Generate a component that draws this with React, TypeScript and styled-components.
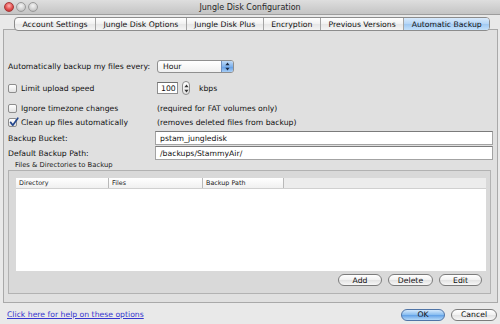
import styled, { createGlobalStyle } from 'styled-components';

const GlobalStyle = createGlobalStyle`
  html, body {
    margin: 0;
    padding: 0;
  }
  body {
    font-family: 'DejaVu Sans', 'Liberation Sans', sans-serif;
    font-size: 7.7px;
    color: #111;
  }
`;

const Window = styled.div`
  width: 500px;
  height: 324px;
  background: #e9e9e9;
  display: flex;
  flex-direction: column;
  overflow: hidden;
`;

const TitleBar = styled.div`
  flex: none;
  height: 14px;
  display: grid;
  grid-template-columns: 1fr auto 1fr;
  align-items: center;
  background: linear-gradient(#dedede, #c4c4c4);
  border-bottom: 1px solid #9d9d9d;
`;

const Lights = styled.div`
  display: flex;
  gap: 2px;
  padding-left: 4px;
`;

const Light = styled.span<{ $red?: boolean }>`
  width: 10px;
  height: 10px;
  border-radius: 50%;
  box-sizing: border-box;
  border: 1px solid ${(p) => (p.$red ? '#a33a3a' : '#9a9a9a')};
  background: ${(p) =>
    p.$red
      ? 'radial-gradient(circle at 50% 35%, #ffb3b3 0%, #e2504f 55%, #b42222 100%)'
      : 'radial-gradient(circle at 50% 35%, #f4f4f4 0%, #cfcfcf 60%, #a9a9a9 100%)'};
`;

const Title = styled.div`
  font-size: 8px;
  color: #262626;
`;

const Body = styled.div`
  flex: 1;
  display: flex;
  flex-direction: column;
  padding: 0 2px 0 3px;
`;

const TabStrip = styled.div`
  flex: none;
  align-self: flex-start;
  display: flex;
  height: 14px;
  margin: 2px 0 -2px 11px;
  box-sizing: border-box;
  border: 1px solid #8c8c8c;
  border-radius: 4px;
  overflow: hidden;
  position: relative;
  z-index: 1;
  background: linear-gradient(#ffffff, #f1f1f1 50%, #e6e6e6 51%, #f4f4f4);
`;

const Tab = styled.div<{ $active?: boolean }>`
  display: flex;
  align-items: center;
  padding: 0 7.5px;
  color: #111;
  white-space: nowrap;
  & + & {
    border-left: 1px solid #a4a4a4;
  }
  background: ${(p) =>
    p.$active
      ? 'linear-gradient(#d9eafc, #b4d5f7 50%, #9fc8f2 51%, #c3e0fb)'
      : 'transparent'};
`;

const Panel = styled.div`
  flex: none;
  height: 274px;
  box-sizing: border-box;
  border: 1px solid #a9a9a9;
  background: #e0e0e0;
  display: flex;
  flex-direction: column;
`;

const FormRow = styled.div<{ $mt: number }>`
  display: grid;
  grid-template-columns: 147px 1fr;
  align-items: center;
  height: 14px;
  margin-top: ${(p) => p.$mt}px;
  padding: 0 4px;
`;

const Label = styled.div`
  display: flex;
  align-items: center;
  gap: 4px;
  white-space: nowrap;
`;

const Note = styled.div`
  padding-left: 2px;
  white-space: nowrap;
`;

const Check = styled.span`
  width: 9px;
  height: 9px;
  box-sizing: border-box;
  border: 1px solid #8d8d8d;
  border-radius: 2px;
  background: linear-gradient(#ffffff, #e3e3e3);
  position: relative;
  flex: none;
  svg {
    position: absolute;
    left: 0;
    top: -2px;
  }
`;

const Popup = styled.div`
  margin-left: 2px;
  width: 77px;
  height: 13px;
  box-sizing: border-box;
  border: 1px solid #8f8f8f;
  border-radius: 3px;
  display: flex;
  overflow: hidden;
  background: linear-gradient(#ffffff, #f0f0f0);
`;

const PopupText = styled.div`
  flex: 1;
  padding-left: 5px;
  display: flex;
  align-items: center;
`;

const PopupArrows = styled.div`
  width: 11px;
  display: flex;
  align-items: center;
  justify-content: center;
  border-left: 1px solid #6f8fbf;
  background: linear-gradient(#bfdaf7, #7fb2ec 50%, #5f9ce6 51%, #a7cdf5);
`;

const SpinWrap = styled.div`
  display: flex;
  align-items: center;
  gap: 4px;
  margin-left: 2px;
`;

const NumField = styled.div`
  width: 21px;
  height: 12px;
  box-sizing: border-box;
  border: 1px solid #8e8e8e;
  border-top-color: #6e6e6e;
  background: #fff;
  padding-left: 3px;
  display: flex;
  align-items: center;
`;

const Stepper = styled.div`
  width: 8px;
  height: 14px;
  box-sizing: border-box;
  border: 1px solid #8e8e8e;
  border-radius: 4px;
  background: linear-gradient(#ffffff, #e2e2e2);
  display: flex;
  align-items: center;
  justify-content: center;
`;

const Unit = styled.span`
  margin-left: 5px;
`;

const TextInput = styled.div`
  height: 14px;
  box-sizing: border-box;
  border: 1px solid #a3a3a3;
  border-top-color: #7b7b7b;
  background: #fff;
  padding-left: 4px;
  display: flex;
  align-items: center;
  white-space: nowrap;
`;

const GroupLabel = styled.div`
  height: 10px;
  line-height: 10px;
  padding-left: 11px;
  font-size: 6.8px;
  color: #1a1a1a;
`;

const GroupBox = styled.div`
  height: 124px;
  margin: 0 6px 0 4px;
  box-sizing: border-box;
  border: 1px solid #b2b2b2;
  background: #d9d9d9;
  padding: 7px 4px 0 7px;
  display: flex;
  flex-direction: column;
`;

const Table = styled.div`
  height: 93px;
  background: #fff;
  display: flex;
  flex-direction: column;
`;

const HeaderRow = styled.div`
  height: 10px;
  display: flex;
  background: #ececec;
  border-bottom: 1px solid #d0d0d0;
`;

const HeaderCell = styled.div<{ $w: number }>`
  width: ${(p) => p.$w}px;
  box-sizing: border-box;
  padding-left: 3px;
  display: flex;
  align-items: center;
  font-size: 6.4px;
  color: #1a1a1a;
  border-right: 1px solid #b9b9b9;
  background: linear-gradient(#ffffff, #f0f0f0);
`;

const ButtonRow = styled.div`
  display: flex;
  justify-content: flex-end;
  gap: 6px;
  margin-top: 3px;
  padding-right: 4px;
`;

const PillButton = styled.div<{ $w: number; $primary?: boolean }>`
  width: ${(p) => p.$w}px;
  height: 12px;
  box-sizing: border-box;
  border: 1px solid ${(p) => (p.$primary ? '#4f74a6' : '#7c7c7c')};
  border-radius: 7px;
  display: flex;
  align-items: center;
  justify-content: center;
  color: #111;
  background: ${(p) =>
    p.$primary
      ? 'linear-gradient(#d4e8fb, #86bcf0 50%, #5f9fe6 51%, #b5d9f8)'
      : 'linear-gradient(#ffffff, #f1f1f1 50%, #e2e2e2 51%, #f7f7f7)'};
`;

const BottomBar = styled.div`
  flex: 1;
  display: flex;
  align-items: center;
  justify-content: space-between;
  padding: 2px 1px 0 4px;
`;

const HelpLink = styled.a`
  color: #3535cf;
  text-decoration: underline;
  cursor: pointer;
`;

const DialogButtons = styled.div`
  display: flex;
  gap: 6px;
`;

function CheckMark() {
  return (
    <svg width="10" height="10" viewBox="0 0 10 10">
      <path d="M1.6 5.4 L3.8 8.2 L8.8 1.2" fill="none" stroke="#23468c" strokeWidth="1.7" strokeLinecap="round" strokeLinejoin="round" />
    </svg>
  );
}

function UpDown({ color }: { color: string }) {
  return (
    <svg width="5" height="9" viewBox="0 0 5 9">
      <path d="M2.5 0.5 L4.6 3.3 L0.4 3.3 Z" fill={color} />
      <path d="M2.5 8.5 L4.6 5.7 L0.4 5.7 Z" fill={color} />
    </svg>
  );
}

export default function App() {
  const tabs = [
    'Account Settings',
    'Jungle Disk Options',
    'Jungle Disk Plus',
    'Encryption',
    'Previous Versions',
    'Automatic Backup',
  ];

  return (
    <Window>
      <GlobalStyle />
      <TitleBar>
        <Lights>
          <Light $red />
          <Light />
          <Light />
        </Lights>
        <Title>Jungle Disk Configuration</Title>
        <div />
      </TitleBar>
      <Body>
        <TabStrip>
          {tabs.map((t) => (
            <Tab key={t} $active={t === 'Automatic Backup'}>
              {t}
            </Tab>
          ))}
        </TabStrip>
        <Panel>
          <FormRow $mt={29}>
            <Label>Automatically backup my files every:</Label>
            <Popup>
              <PopupText>Hour</PopupText>
              <PopupArrows>
                <UpDown color="#1b2a44" />
              </PopupArrows>
            </Popup>
          </FormRow>
          <FormRow $mt={8}>
            <Label>
              <Check />
              Limit upload speed
            </Label>
            <SpinWrap>
              <NumField>100</NumField>
              <Stepper>
                <UpDown color="#333" />
              </Stepper>
              <Unit>kbps</Unit>
            </SpinWrap>
          </FormRow>
          <FormRow $mt={6}>
            <Label>
              <Check />
              Ignore timezone changes
            </Label>
            <Note>(required for FAT volumes only)</Note>
          </FormRow>
          <FormRow $mt={0}>
            <Label>
              <Check>
                <CheckMark />
              </Check>
              Clean up files automatically
            </Label>
            <Note>(removes deleted files from backup)</Note>
          </FormRow>
          <FormRow $mt={2}>
            <Label>Backup Bucket:</Label>
            <TextInput>pstam_jungledisk</TextInput>
          </FormRow>
          <FormRow $mt={1}>
            <Label>Default Backup Path:</Label>
            <TextInput>/backups/StammyAir/</TextInput>
          </FormRow>
          <GroupLabel>Files &amp; Directories to Backup</GroupLabel>
          <GroupBox>
            <Table>
              <HeaderRow>
                <HeaderCell $w={93}>Directory</HeaderCell>
                <HeaderCell $w={94}>Files</HeaderCell>
                <HeaderCell $w={81}>Backup Path</HeaderCell>
              </HeaderRow>
            </Table>
            <ButtonRow>
              <PillButton $w={44}>Add</PillButton>
              <PillButton $w={45}>Delete</PillButton>
              <PillButton $w={43}>Edit</PillButton>
            </ButtonRow>
          </GroupBox>
        </Panel>
        <BottomBar>
          <HelpLink>Click here for help on these options</HelpLink>
          <DialogButtons>
            <PillButton $w={44} $primary>
              OK
            </PillButton>
            <PillButton $w={46}>Cancel</PillButton>
          </DialogButtons>
        </BottomBar>
      </Body>
    </Window>
  );
}
